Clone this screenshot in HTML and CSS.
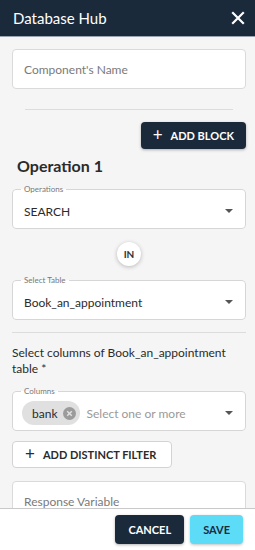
FILE: index.html
```html
<!DOCTYPE html>
<html lang="en">
<head>
    <meta charset="UTF-8">
    <meta name="viewport" content="width=device-width, initial-scale=1.0">
    <title>Database Hub</title>
    <link rel="stylesheet" href="styles.css">
</head>
<body>

    <div class="drawer">
        <div class="header">
            <span class="title">Database Hub</span>
            <svg class="close" width="14" height="14" viewBox="0 0 14 14">
                <path d="M2 2 L12 12 M12 2 L2 12" stroke="#fff" stroke-width="2.2" stroke-linecap="square"/>
            </svg>
        </div>

        <div class="content">
            <div class="text-input">Component's Name</div>
            <hr class="divider inset">

            <div class="block-row">
                <button class="btn dark"><span class="plus">+</span> ADD BLOCK</button>
            </div>

            <h2>Operation 1</h2>

            <fieldset class="field">
                <legend>Operations</legend>
                <div class="field-body">
                    <span class="value">SEARCH</span>
                    <span class="caret"></span>
                </div>
            </fieldset>

            <div class="join-row">
                <div class="join">IN</div>
            </div>

            <fieldset class="field">
                <legend>Select Table</legend>
                <div class="field-body">
                    <span class="value">Book_an_appointment</span>
                    <span class="caret"></span>
                </div>
            </fieldset>

            <hr class="divider full">

            <p class="columns-title">Select columns of Book_an_appointment table *</p>

            <fieldset class="field">
                <legend>Columns</legend>
                <div class="field-body">
                    <span class="chip">bank
                        <svg width="13" height="13" viewBox="0 0 13 13">
                            <circle cx="6.5" cy="6.5" r="6.5" fill="#9b9b9b"/>
                            <path d="M4.2 4.2 L8.8 8.8 M8.8 4.2 L4.2 8.8" stroke="#e0e0e0" stroke-width="1.5"/>
                        </svg>
                    </span>
                    <span class="placeholder">Select one or more</span>
                    <span class="caret"></span>
                </div>
            </fieldset>

            <button class="btn outline"><span class="plus">+</span> ADD DISTINCT FILTER</button>

            <div class="text-input response">Response Variable</div>
        </div>

        <div class="footer">
            <button class="btn dark">CANCEL</button>
            <button class="btn cyan">SAVE</button>
        </div>
    </div>

</body>
</html>
```

FILE: styles.css
```css
body {
    margin: 0;
    font-family: Lato, "Open Sans", sans-serif;
    background-color: #f5f5f5;
    color: #2b2b2b;
}
.drawer {
    width: 255px;
    height: 550px;
    display: flex;
    flex-direction: column;
    overflow: hidden;
}
.header {
    height: 37px;
    flex-shrink: 0;
    background-color: #1b2a3b;
    border-bottom: 1px solid #9aa3ad;
    display: flex;
    align-items: center;
    justify-content: space-between;
    padding: 0 10px 0 13px;
    box-sizing: border-box;
}
.title {
    color: #fff;
    font-size: 15px;
}
.content {
    flex: 1;
    overflow: hidden;
    padding: 12px 9px 0 12px;
    display: flex;
    flex-direction: column;
}
.content > * {
    flex-shrink: 0;
}
.text-input {
    height: 40px;
    background-color: #fff;
    border: 1px solid #dadada;
    border-radius: 4px;
    box-sizing: border-box;
    display: flex;
    align-items: center;
    padding-left: 11px;
    font-size: 12px;
    color: #7a7a7a;
}
.divider {
    border: none;
    border-top: 1px solid #dcdcdc;
    margin: 0;
}
.divider.inset {
    margin: 20px 13px 0 13px;
}
.divider.full {
    margin-top: 12px;
}
.block-row {
    display: flex;
    justify-content: flex-end;
    margin-top: 12px;
}
.btn {
    font-family: inherit;
    font-size: 11px;
    font-weight: bold;
    border-radius: 4px;
    height: 27px;
    padding: 0 12px;
    border: none;
    display: flex;
    align-items: center;
    gap: 8px;
    cursor: pointer;
}
.plus {
    font-size: 17px;
    font-weight: normal;
    line-height: 1;
    margin-top: -2px;
}
.dark {
    background-color: #1b2a3b;
    color: #fff;
    box-shadow: 0 1px 3px rgba(0, 0, 0, 0.3);
}
.cyan {
    background-color: #5ddcf8;
    color: #1b2a3b;
    box-shadow: 0 1px 3px rgba(0, 0, 0, 0.25);
}
.outline {
    background-color: #fff;
    color: #2b2b2b;
    border: 1px solid #d3d3d3;
    align-self: flex-start;
    padding: 0 15px 0 12px;
    margin-top: 10px;
}
h2 {
    font-size: 16px;
    font-weight: bold;
    margin: 8px 0 0 5px;
    line-height: 18px;
}
.field {
    margin: 9px 0 0 0;
    padding: 0;
    min-width: 0;
    background-color: #fff;
    border: 1px solid #d6d6d6;
    border-radius: 4px;
}
.field legend {
    font-size: 8px;
    color: #777;
    padding: 0 3px;
    margin-left: 8px;
    line-height: 10px;
}
.field-body {
    height: 34px;
    display: flex;
    align-items: center;
    padding: 0 12px 0 11px;
}
.field .value {
    font-size: 12px;
    flex: 1;
}
.caret {
    width: 0;
    height: 0;
    border-left: 4px solid transparent;
    border-right: 4px solid transparent;
    border-top: 4px solid #555;
}
.join-row {
    display: flex;
    justify-content: center;
    margin-top: 13px;
}
.join {
    width: 24px;
    height: 24px;
    border-radius: 50%;
    background-color: #fff;
    box-shadow: 0 1px 4px rgba(0, 0, 0, 0.25);
    font-size: 10px;
    font-weight: bold;
    display: flex;
    align-items: center;
    justify-content: center;
    color: #333;
}
.columns-title {
    font-size: 12px;
    line-height: 16px;
    margin: 12px 0 0 0;
}
.chip {
    background-color: #e0e0e0;
    border-radius: 12px;
    height: 24px;
    display: flex;
    align-items: center;
    gap: 6px;
    padding: 0 4px 0 10px;
    font-size: 12px;
    margin: 0 6px 0 -2px;
}
.placeholder {
    flex: 1;
    font-size: 12px;
    color: #9a9a9a;
}
.response {
    margin-top: 13px;
}
.footer {
    height: 42px;
    flex-shrink: 0;
    background-color: #fff;
    border-top: 1px solid #c9c9c9;
    display: flex;
    justify-content: flex-end;
    align-items: center;
    gap: 6px;
    padding: 0 12px;
    box-sizing: border-box;
}
.footer .btn {
    height: 29px;
    padding: 0 13px;
}
```
